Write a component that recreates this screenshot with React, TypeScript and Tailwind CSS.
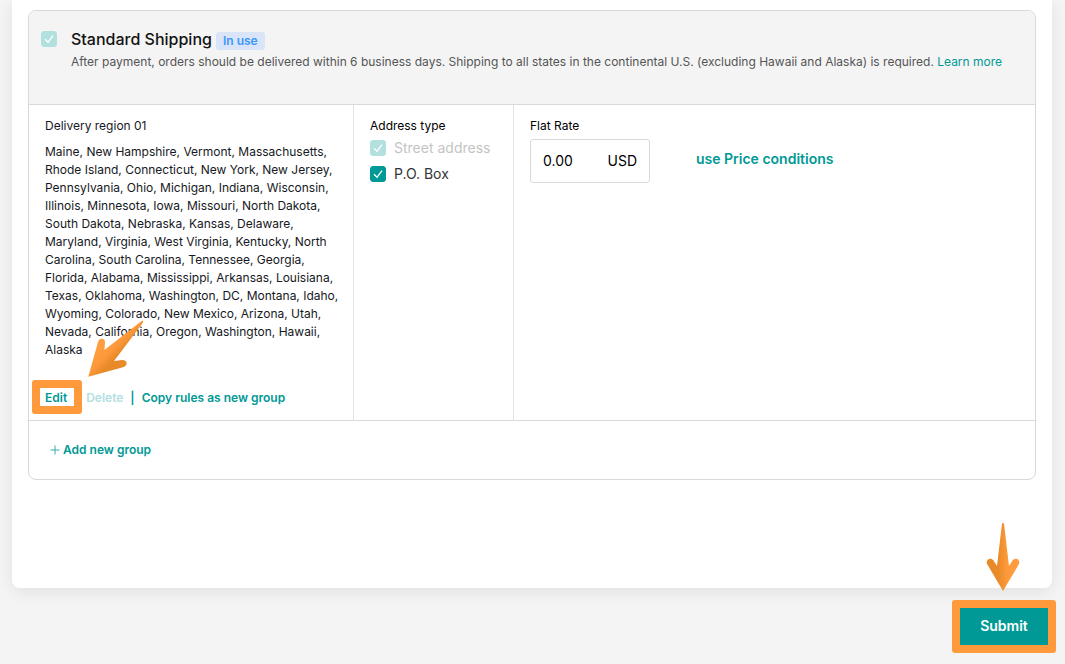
import { useState, type InputHTMLAttributes } from 'react';

const states =
  'Maine, New Hampshire, Vermont, Massachusetts, Rhode Island, Connecticut, New York, New Jersey, Pennsylvania, Ohio, Michigan, Indiana, Wisconsin, Illinois, Minnesota, Iowa, Missouri, North Dakota, South Dakota, Nebraska, Kansas, Delaware, Maryland, Virginia, West Virginia, Kentucky, North Carolina, South Carolina, Tennessee, Georgia, Florida, Alabama, Mississippi, Arkansas, Louisiana, Texas, Oklahoma, Washington, DC, Montana, Idaho, Wyoming, Colorado, New Mexico, Arizona, Utah, Nevada, California, Oregon, Washington, Hawaii, Alaska';

function Checkbox(props: InputHTMLAttributes<HTMLInputElement>) {
  return (
    <span className="relative block size-4 shrink-0">
      <input
        type="checkbox"
        className="peer block size-4 appearance-none rounded-[3px] border border-[#009995] bg-white checked:bg-[#009995] disabled:border-[#b2e0df] disabled:checked:bg-[#b2e0df]"
        {...props}
      />
      <svg
        viewBox="0 0 16 16"
        className="pointer-events-none absolute inset-0 hidden size-4 peer-checked:block"
        fill="none"
        stroke="white"
        strokeWidth="1.4"
        aria-hidden="true"
      >
        <path d="M4 8.2 7 11.3 12 4.7" />
      </svg>
    </span>
  );
}

function EditArrow() {
  return (
    <svg
      viewBox="0 0 60 60"
      className="pointer-events-none absolute -top-[71px] left-10 size-[60px]"
      aria-hidden="true"
    >
      <defs>
        <linearGradient id="editArrow" gradientUnits="userSpaceOnUse" x1="20" y1="26" x2="36" y2="42">
          <stop offset="0" stopColor="#ff9d3f" />
          <stop offset="0.4" stopColor="#fc993a" />
          <stop offset="0.75" stopColor="#e98a29" />
        </linearGradient>
      </defs>
      <path
        d="M58 3 C58.5 3.6 58 4.3 57 6 L29 43 L37 42 C42.5 41.6 43.6 47.8 38 49.3 L3.3 58.7 L13 24 C14.3 19 20.8 20.1 20 25 L19.4 32 L56 3.6 C57 2.8 57.5 2.6 58 3Z"
        fill="url(#editArrow)"
      />
    </svg>
  );
}

function SubmitArrow() {
  return (
    <svg
      viewBox="0 0 34 70"
      className="pointer-events-none absolute -top-[86px] left-[26px] h-[70px] w-[34px]"
      aria-hidden="true"
    >
      <defs>
        <linearGradient id="submitArrow" x1="0" y1="0" x2="1" y2="0">
          <stop offset="0.35" stopColor="#e98a29" />
          <stop offset="0.65" stopColor="#ff9b3c" />
        </linearGradient>
      </defs>
      <path
        d="M16 1.6 C16.2 .7 17.8 .7 18 1.6 L23 44 L26.5 38.5 C29.5 34.5 35 38 32.8 42.3 L17 69 L1.2 42.3 C-1 38 4.5 34.5 7.5 38.5 L11 44Z"
        fill="url(#submitArrow)"
      />
    </svg>
  );
}

export default function App() {
  const [poBox, setPoBox] = useState(true);
  const [rate, setRate] = useState('0.00');

  return (
    <div className="min-h-screen bg-[#f4f4f4] pr-[13px] pb-[18px] pl-3 font-['Inter','Liberation_Sans',sans-serif] text-xs leading-[18px] text-[#161823]">
      <main className="rounded-b-lg bg-white px-4 pt-[10px] pb-[108px] shadow-[0_4px_16px_rgba(0,0,0,0.08)]">
        <section className="overflow-hidden rounded-lg border border-[#d9d9d9]">
          <header className="flex gap-[14px] border-b border-[#d9d9d9] bg-[#f4f4f4] px-3 pt-[18px] pb-[33px]">
            <div className="pt-[2px]">
              <Checkbox id="standard" checked disabled readOnly />
            </div>
            <div>
              <div className="flex items-start gap-1">
                <label htmlFor="standard" className="text-base leading-5 font-medium text-[#121212]">
                  Standard Shipping
                </label>
                <span className="mt-[3px] rounded-[3px] bg-[#d9e4f8] px-[7px] font-semibold text-[#3c97fb]">
                  In use
                </span>
              </div>
              <p className="mt-[3px] text-[#555555]">
                After payment, orders should be delivered within 6 business days. Shipping to all states in the
                continental U.S. (excluding Hawaii and Alaska) is required.{' '}
                <a href="#learn" className="text-[#009995]">
                  Learn more
                </a>
              </p>
            </div>
          </header>

          <div className="flex border-b border-[#d9d9d9]">
            <div className="w-[325px] shrink-0 border-r border-[#e3e3e3] pt-3 pr-3 pb-[13px] pl-4">
              <h2>Delivery region 01</h2>
              <p className="mt-2">{states}</p>
              <div className="mt-[30px] flex items-center font-semibold text-[#009995]">
                <div className="relative">
                  <button type="button" className="block">
                    Edit
                  </button>
                  <span
                    className="pointer-events-none absolute -top-[9px] -left-[13px] h-[34px] w-[50px] rounded-[3px] border-8 border-[#ff9a3c]"
                    aria-hidden="true"
                  />
                  <EditArrow />
                </div>
                <button type="button" disabled className="ml-[19px] text-[#b2e0df]">
                  Delete
                </button>
                <span className="mx-[7px]">|</span>
                <button type="button">Copy rules as new group</button>
              </div>
            </div>

            <fieldset className="w-40 shrink-0 border-r border-[#e3e3e3] px-4 pt-3">
              <legend className="float-left w-full text-black">Address type</legend>
              <div className="clear-both flex flex-col gap-[6px] pt-[3px] text-sm leading-5">
                <label className="flex items-center gap-2 text-[#c4c4c4]">
                  <Checkbox checked disabled readOnly />
                  Street address
                </label>
                <label className="flex items-center gap-2 text-[#333333]">
                  <Checkbox checked={poBox} onChange={(e) => setPoBox(e.target.checked)} />
                  P.O. Box
                </label>
              </div>
            </fieldset>

            <div className="flex-1 px-4 pt-3">
              <label htmlFor="rate" className="block text-black">
                Flat Rate
              </label>
              <div className="mt-1 flex items-center gap-[46px] text-sm leading-5">
                <div className="flex h-11 w-[120px] items-center justify-between rounded-[3px] border border-[#d9d9d9] px-3 text-black">
                  <input
                    id="rate"
                    value={rate}
                    onChange={(e) => setRate(e.target.value)}
                    className="w-12 bg-transparent outline-none"
                  />
                  <span>USD</span>
                </div>
                <button type="button" className="mb-1 font-semibold text-[#009995]">
                  use Price conditions
                </button>
              </div>
            </div>
          </div>

          <div className="px-[21px] py-5">
            <button type="button" className="flex items-center gap-[3px] font-semibold text-[#009995]">
              <svg viewBox="0 0 10 10" className="size-[10px]" stroke="#33adaa" strokeWidth="1" aria-hidden="true">
                <path d="M5 .5v9M.5 5h9" />
              </svg>
              Add new group
            </button>
          </div>
        </section>
      </main>

      <div className="flex justify-end pt-5 pr-1">
        <div className="relative">
          <button
            type="button"
            className="block h-[37px] w-[88px] bg-[#009995] pb-[2px] text-sm leading-5 font-semibold text-white"
          >
            Submit
          </button>
          <span
            className="pointer-events-none absolute -inset-2 rounded-[3px] border-8 border-[#ff9a3c]"
            aria-hidden="true"
          />
          <SubmitArrow />
        </div>
      </div>
    </div>
  );
}
